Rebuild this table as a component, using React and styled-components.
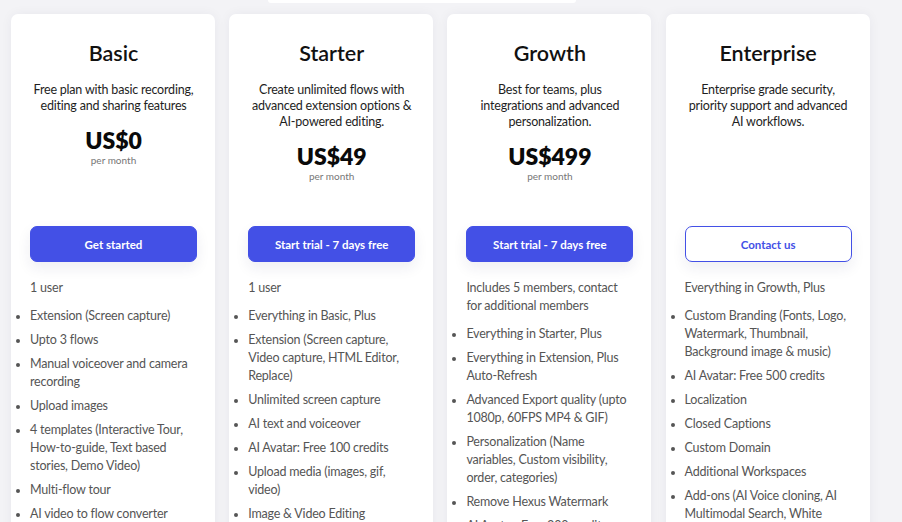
import React from "react";
import styled, { createGlobalStyle } from "styled-components";

const GlobalStyle = createGlobalStyle`
  html, body {
    margin: 0;
    padding: 0;
    overflow: hidden;
    background: #f3f3f6;
    font-family: Lato, "Open Sans", sans-serif;
  }
`;

const Page = styled.div`
  width: 902px;
  height: 522px;
  overflow: hidden;
`;

const TopTab = styled.div`
  width: 308px;
  height: 3px;
  margin-left: 268px;
  background: #ffffff;
  border-radius: 0 0 6px 6px;
`;

const Grid = styled.div`
  display: grid;
  grid-template-columns: repeat(4, 204px);
  column-gap: 14.2px;
  padding: 11px 0 0 11px;
`;

const Card = styled.div`
  background: #ffffff;
  border-radius: 7px;
  box-shadow: 0 0 12px rgba(30, 30, 80, 0.05);
  padding: 18px 18px 20px 19px;
  height: 700px;
  box-sizing: border-box;
`;

const Header = styled.div`
  height: 194px;
  display: flex;
  flex-direction: column;
  align-items: center;
  text-align: center;
`;

const Title = styled.h2`
  margin: 9px 0 0;
  font-size: 21.5px;
  line-height: 24px;
  font-weight: 600;
  color: #111;
`;

const Description = styled.p`
  margin: 17px 0 0;
  font-size: 12.5px;
  letter-spacing: -0.2px;
  line-height: 16px;
  color: #1e1e1e;
`;

const Price = styled.div`
  margin-top: 13px;
  font-size: 23px;
  line-height: 26px;
  font-weight: 800;
  color: #0a0a0a;
`;

const PerMonth = styled.div`
  font-size: 10px;
  line-height: 14px;
  color: #777;
`;

const ActionButton = styled.button`
  display: block;
  width: 100%;
  height: 36px;
  border-radius: 7px;
  font-family: inherit;
  font-size: 11.5px;
  font-weight: 700;
  cursor: pointer;
  border: 1px solid #4350e6;
  background: ${(p) => (p.$outline ? "#ffffff" : "#4350e6")};
  color: ${(p) => (p.$outline ? "#4350e6" : "#ffffff")};
  box-shadow: 0 6px 14px rgba(40, 40, 90, 0.08);
`;

const Lead = styled.p`
  margin: 17px 0 0;
  font-size: 12.5px;
  letter-spacing: -0.2px;
  line-height: 18px;
  color: #555;
`;

const Features = styled.ul`
  margin: 10px 0 0;
  padding: 0;
  list-style: disc outside;
`;

const Feature = styled.li`
  font-size: 12.5px;
  letter-spacing: -0.2px;
  line-height: 18px;
  color: #555;
  margin-bottom: 6px;

  &::marker {
    font-size: 11px;
  }
`;

const plans = [
  {
    name: "Basic",
    description: "Free plan with basic recording, editing and sharing features",
    price: "US$0",
    cta: "Get started",
    lead: "1 user",
    features: [
      "Extension (Screen capture)",
      "Upto 3 flows",
      "Manual voiceover and camera recording",
      "Upload images",
      "4 templates (Interactive Tour, How-to-guide, Text based stories, Demo Video)",
      "Multi-flow tour",
      "AI video to flow converter",
      "Analytics",
    ],
  },
  {
    name: "Starter",
    description:
      "Create unlimited flows with advanced extension options & AI-powered editing.",
    price: "US$49",
    cta: "Start trial - 7 days free",
    lead: "1 user",
    features: [
      "Everything in Basic, Plus",
      "Extension (Screen capture, Video capture, HTML Editor, Replace)",
      "Unlimited screen capture",
      "AI text and voiceover",
      "AI Avatar: Free 100 credits",
      "Upload media (images, gif, video)",
      "Image & Video Editing",
      "Custom CTA",
    ],
  },
  {
    name: "Growth",
    description:
      "Best for teams, plus integrations and advanced personalization.",
    price: "US$499",
    cta: "Start trial - 7 days free",
    lead: "Includes 5 members, contact for additional members",
    features: [
      "Everything in Starter, Plus",
      "Everything in Extension, Plus Auto-Refresh",
      "Advanced Export quality (upto 1080p, 60FPS MP4 & GIF)",
      "Personalization (Name variables, Custom visibility, order, categories)",
      "Remove Hexus Watermark",
      "AI Avatar: Free 300 credits",
    ],
  },
  {
    name: "Enterprise",
    description:
      "Enterprise grade security, priority support and advanced AI workflows.",
    cta: "Contact us",
    outline: true,
    lead: "Everything in Growth, Plus",
    features: [
      "Custom Branding (Fonts, Logo, Watermark, Thumbnail, Background image & music)",
      "AI Avatar: Free 500 credits",
      "Localization",
      "Closed Captions",
      "Custom Domain",
      "Additional Workspaces",
      "Add-ons (AI Voice cloning, AI Multimodal Search, White Labelling)",
    ],
  },
];

function App() {
  return (
    <Page>
      <GlobalStyle />
      <TopTab />
      <Grid>
        {plans.map((plan) => (
          <Card key={plan.name}>
            <Header>
              <Title>{plan.name}</Title>
              <Description>{plan.description}</Description>
              {plan.price && (
                <>
                  <Price>{plan.price}</Price>
                  <PerMonth>per month</PerMonth>
                </>
              )}
            </Header>
            <ActionButton $outline={plan.outline}>{plan.cta}</ActionButton>
            <Lead>{plan.lead}</Lead>
            <Features>
              {plan.features.map((feature, index) => (
                <Feature key={index}>{feature}</Feature>
              ))}
            </Features>
          </Card>
        ))}
      </Grid>
    </Page>
  );
}

export default App;
